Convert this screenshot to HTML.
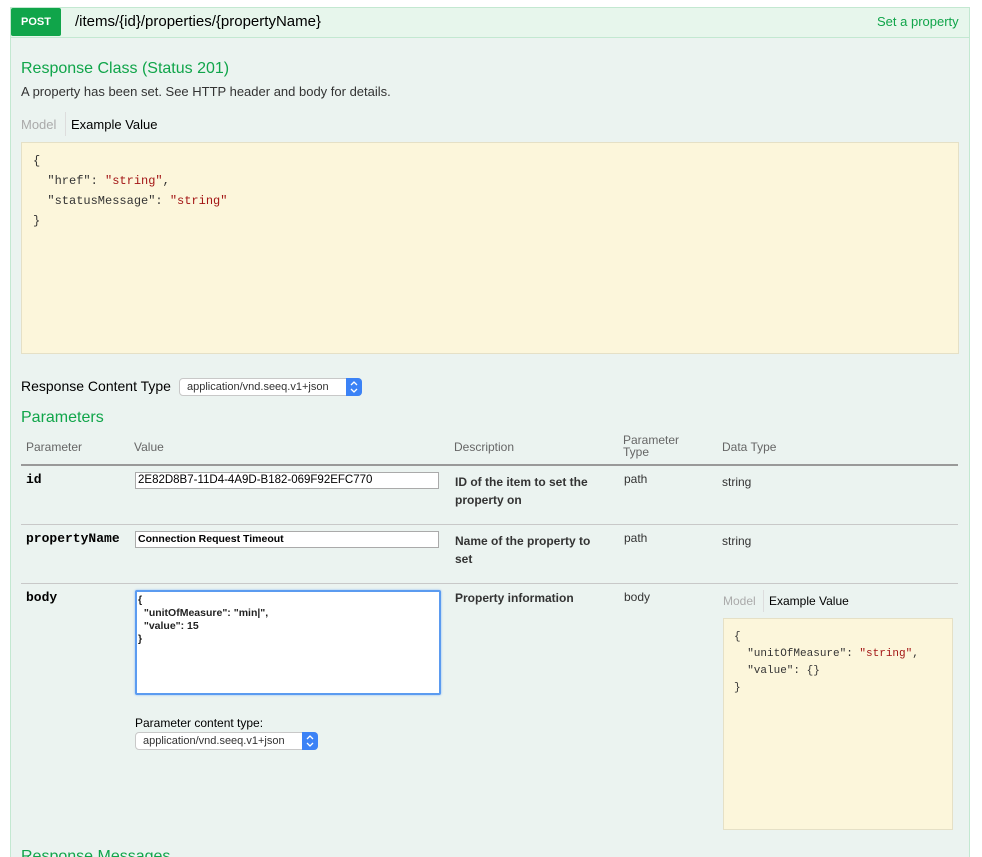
<!DOCTYPE html>
<html style="overflow:hidden;height:857px"><head><style>
body{margin:0;width:982px;height:857px;overflow:hidden;background:#fff;font-family:"Liberation Sans",sans-serif;color:#333;position:relative}
.a{position:absolute;white-space:nowrap}
.box{position:absolute;left:10px;top:7px;width:958px;height:870px;background:#ebf3f0;border:1px solid #c3e8d1}
.hdr{position:absolute;left:10px;top:7px;width:958px;height:29px;background:#e7f6ec;border:1px solid #c3e8d1}
.post{position:absolute;left:11px;top:8px;width:50px;height:28px;background:#10a54a;color:#fff;font-weight:bold;font-size:11px;text-align:center;line-height:28px;border-radius:2px}
.g{color:#10a54a}
.mono{font-family:"Liberation Mono","DejaVu Sans Mono",monospace}
.yel{position:absolute;background:#fcf6db;border:1px solid #e5e0c6}
.sel{position:absolute;background:#fff;border:1px solid #c8c8c8;border-radius:4px;font-size:11px;color:#333}
.sel .ar{position:absolute;right:-1px;top:-1px;bottom:-1px;width:16px;background:#3b82f6;border-radius:0 4px 4px 0}
.line{position:absolute;left:21px;width:937px;height:1px;background:#c8c8c8}
.inp{position:absolute;background:#fff;border:1px solid #aaa;font-size:11px;color:#000}
.b{font-weight:bold;color:#000}
.s{color:#a31515}
</style></head><body>
<div class="box"></div>
<div class="hdr"></div>
<div class="post">POST</div>
<div class="a" style="left:75px;top:13px;font-size:15px;color:#000">/items/{id}/properties/{propertyName}</div>
<div class="a g" style="left:877px;top:14px;font-size:13px">Set a property</div>

<div class="a g" style="left:21px;top:60px;font-size:16px">Response Class (Status 201)</div>
<div class="a" style="left:21px;top:84px;font-size:13px">A property has been set. See HTTP header and body for details.</div>
<div class="a" style="left:21px;top:117px;font-size:13px;color:#aaa">Model</div>
<div class="a" style="left:65px;top:112px;width:1px;height:24px;background:#ddd"></div>
<div class="a" style="left:71px;top:117px;font-size:13px;color:#000">Example Value</div>
<div class="yel" style="left:21px;top:142px;width:936px;height:210px"></div>
<div class="a mono" style="left:33px;top:151px;font-size:12px;line-height:20px;color:#333">{<br>&nbsp;&nbsp;"href": <span class="s">"string"</span>,<br>&nbsp;&nbsp;"statusMessage": <span class="s">"string"</span><br>}</div>

<div class="a" style="left:21px;top:378px;font-size:14px;color:#000">Response Content Type</div>
<div class="sel" style="left:179px;top:378px;width:181px;height:16px"><span class="a" style="left:7px;top:2px">application/vnd.seeq.v1+json</span><div class="ar"><svg width="16" height="18" viewBox="0 0 16 18"><path d="M5 7l3-3 3 3M5 11l3 3 3-3" fill="none" stroke="#fff" stroke-width="1.3"/></svg></div></div>
<div class="a g" style="left:21px;top:409px;font-size:16px">Parameters</div>

<div class="a" style="left:26px;top:440px;font-size:12px;color:#666">Parameter</div>
<div class="a" style="left:134px;top:440px;font-size:12px;color:#666">Value</div>
<div class="a" style="left:454px;top:440px;font-size:12px;color:#666">Description</div>
<div class="a" style="left:623px;top:434px;font-size:12px;color:#666;line-height:12px">Parameter<br>Type</div>
<div class="a" style="left:722px;top:440px;font-size:12px;color:#666">Data Type</div>
<div class="line" style="top:464px;height:2px;background:#999"></div>

<div class="a b mono" style="left:26px;top:472px;font-size:13px">id</div>
<div class="inp" style="left:135px;top:472px;width:302px;height:15px"><span class="a" style="left:2px;top:1px;font-size:11.5px">2E82D8B7-11D4-4A9D-B182-069F92EFC770</span></div>
<div class="a b" style="left:455px;top:473px;font-size:12px;line-height:18px;color:#333">ID of the item to set the<br>property on</div>
<div class="a" style="left:624px;top:472px;font-size:12px">path</div>
<div class="a" style="left:722px;top:475px;font-size:12px">string</div>
<div class="line" style="top:524px"></div>

<div class="a b mono" style="left:26px;top:531px;font-size:13px">propertyName</div>
<div class="inp" style="left:135px;top:531px;width:302px;height:15px"><span class="a b" style="left:2px;top:1px;font-size:10.5px">Connection Request Timeout</span></div>
<div class="a b" style="left:455px;top:532px;font-size:12px;line-height:18px;color:#333">Name of the property to<br>set</div>
<div class="a" style="left:624px;top:531px;font-size:12px">path</div>
<div class="a" style="left:722px;top:534px;font-size:12px">string</div>
<div class="line" style="top:583px"></div>

<div class="a b mono" style="left:26px;top:590px;font-size:13px">body</div>
<div class="a" style="left:135px;top:590px;width:302px;height:101px;background:#fff;border:2px solid #5b9bf0;border-radius:2px;box-shadow:0 0 2px #8bb8f5"><div class="a b" style="left:1px;top:2px;font-size:10.5px;line-height:13px;color:#222">{<br>&nbsp;&nbsp;"unitOfMeasure": "min|",<br>&nbsp;&nbsp;"value": 15<br>}</div></div>
<div class="a b" style="left:455px;top:591px;font-size:12px;color:#333">Property information</div>
<div class="a" style="left:624px;top:590px;font-size:12px">body</div>
<div class="a" style="left:723px;top:594px;font-size:12px;color:#aaa">Model</div>
<div class="a" style="left:763px;top:590px;width:1px;height:22px;background:#ddd"></div>
<div class="a" style="left:769px;top:594px;font-size:12px;color:#000">Example Value</div>
<div class="yel" style="left:723px;top:618px;width:228px;height:210px"></div>
<div class="a mono" style="left:734px;top:629px;font-size:11px;line-height:17px;color:#333">{<br>&nbsp;&nbsp;"unitOfMeasure": <span class="s">"string"</span>,<br>&nbsp;&nbsp;"value": {}<br>}</div>

<div class="a" style="left:135px;top:716px;font-size:12px;color:#000">Parameter content type:</div>
<div class="sel" style="left:135px;top:732px;width:181px;height:16px"><span class="a" style="left:7px;top:2px">application/vnd.seeq.v1+json</span><div class="ar"><svg width="16" height="18" viewBox="0 0 16 18"><path d="M5 7l3-3 3 3M5 11l3 3 3-3" fill="none" stroke="#fff" stroke-width="1.3"/></svg></div></div>

<div class="a g" style="left:21px;top:848px;font-size:16px">Response Messages</div>
</body></html>
